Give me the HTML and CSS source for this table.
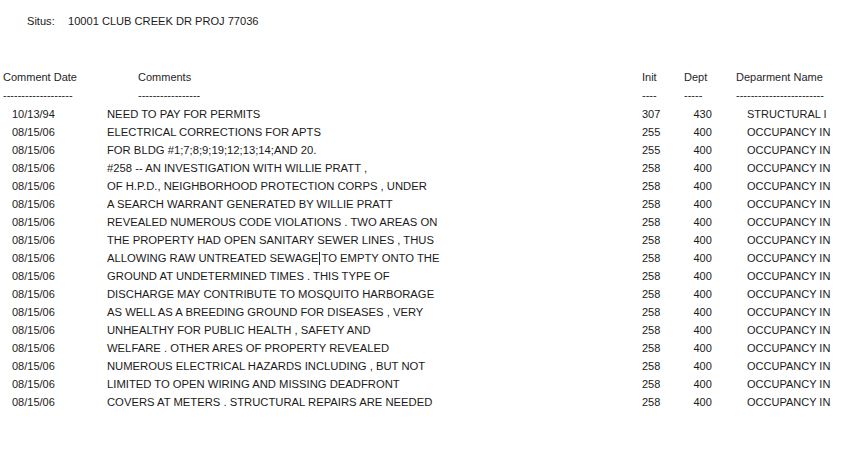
FILE: index.html
```html
<!DOCTYPE html>
<html>
<head>
<meta charset="utf-8">
<link rel="stylesheet" href="styles.css">
</head>
<body>
<div class="situs"><span class="situs-label">Situs:</span><span>10001 CLUB CREEK DR PROJ 77036</span></div>
<div class="report">
  <div class="row head">
    <div class="c1">Comment Date</div><div class="c2">Comments</div><div class="c3">Init</div><div class="c4">Dept</div><div class="c5">Deparment Name</div>
  </div>
  <div class="row head">
    <div class="c1">-------------------</div><div class="c2">-----------------</div><div class="c3">----</div><div class="c4">-----</div><div class="c5">------------------------</div>
  </div>
  <div class="row"><div class="c1">10/13/94</div><div class="c2">NEED TO PAY FOR PERMITS</div><div class="c3">307</div><div class="c4">430</div><div class="c5">STRUCTURAL I</div></div>
  <div class="row"><div class="c1">08/15/06</div><div class="c2">ELECTRICAL CORRECTIONS FOR APTS</div><div class="c3">255</div><div class="c4">400</div><div class="c5">OCCUPANCY IN</div></div>
  <div class="row"><div class="c1">08/15/06</div><div class="c2">FOR BLDG #1;7;8;9;19;12;13;14;AND 20.</div><div class="c3">255</div><div class="c4">400</div><div class="c5">OCCUPANCY IN</div></div>
  <div class="row"><div class="c1">08/15/06</div><div class="c2">#258 -- AN INVESTIGATION WITH WILLIE PRATT ,</div><div class="c3">258</div><div class="c4">400</div><div class="c5">OCCUPANCY IN</div></div>
  <div class="row"><div class="c1">08/15/06</div><div class="c2">OF H.P.D., NEIGHBORHOOD PROTECTION CORPS , UNDER</div><div class="c3">258</div><div class="c4">400</div><div class="c5">OCCUPANCY IN</div></div>
  <div class="row"><div class="c1">08/15/06</div><div class="c2">A SEARCH WARRANT GENERATED BY WILLIE PRATT</div><div class="c3">258</div><div class="c4">400</div><div class="c5">OCCUPANCY IN</div></div>
  <div class="row"><div class="c1">08/15/06</div><div class="c2">REVEALED NUMEROUS CODE VIOLATIONS . TWO AREAS ON</div><div class="c3">258</div><div class="c4">400</div><div class="c5">OCCUPANCY IN</div></div>
  <div class="row"><div class="c1">08/15/06</div><div class="c2">THE PROPERTY HAD OPEN SANITARY SEWER LINES , THUS</div><div class="c3">258</div><div class="c4">400</div><div class="c5">OCCUPANCY IN</div></div>
  <div class="row"><div class="c1">08/15/06</div><div class="c2">ALLOWING RAW UNTREATED SEWAGE<span class="caret"></span>TO EMPTY ONTO THE</div><div class="c3">258</div><div class="c4">400</div><div class="c5">OCCUPANCY IN</div></div>
  <div class="row"><div class="c1">08/15/06</div><div class="c2">GROUND AT UNDETERMINED TIMES . THIS TYPE OF</div><div class="c3">258</div><div class="c4">400</div><div class="c5">OCCUPANCY IN</div></div>
  <div class="row"><div class="c1">08/15/06</div><div class="c2">DISCHARGE MAY CONTRIBUTE TO MOSQUITO HARBORAGE</div><div class="c3">258</div><div class="c4">400</div><div class="c5">OCCUPANCY IN</div></div>
  <div class="row"><div class="c1">08/15/06</div><div class="c2">AS WELL AS A BREEDING GROUND FOR DISEASES , VERY</div><div class="c3">258</div><div class="c4">400</div><div class="c5">OCCUPANCY IN</div></div>
  <div class="row"><div class="c1">08/15/06</div><div class="c2">UNHEALTHY FOR PUBLIC HEALTH , SAFETY AND</div><div class="c3">258</div><div class="c4">400</div><div class="c5">OCCUPANCY IN</div></div>
  <div class="row"><div class="c1">08/15/06</div><div class="c2">WELFARE . OTHER ARES OF PROPERTY REVEALED</div><div class="c3">258</div><div class="c4">400</div><div class="c5">OCCUPANCY IN</div></div>
  <div class="row"><div class="c1">08/15/06</div><div class="c2">NUMEROUS ELECTRICAL HAZARDS INCLUDING , BUT NOT</div><div class="c3">258</div><div class="c4">400</div><div class="c5">OCCUPANCY IN</div></div>
  <div class="row"><div class="c1">08/15/06</div><div class="c2">LIMITED TO OPEN WIRING AND MISSING DEADFRONT</div><div class="c3">258</div><div class="c4">400</div><div class="c5">OCCUPANCY IN</div></div>
  <div class="row"><div class="c1">08/15/06</div><div class="c2">COVERS AT METERS . STRUCTURAL REPAIRS ARE NEEDED</div><div class="c3">258</div><div class="c4">400</div><div class="c5">OCCUPANCY IN</div></div>
</div>
</body>
</html>
```
FILE: styles.css
```css
html, body {
  margin: 0;
  padding: 0;
  background: #ffffff;
}
body {
  font-family: "Liberation Sans", Arial, sans-serif;
  font-size: 11px;
  line-height: 18px;
  color: #1a1a1a;
  width: 851px;
  height: 461px;
  overflow: hidden;
}
.situs {
  display: flex;
  padding: 12px 0 0 27px;
  height: 18px;
  font-size: 11.1px;
}
.situs-label {
  width: 41px;
}
.report {
  margin-top: 38px;
  display: flex;
  flex-direction: column;
}
.row {
  display: grid;
  grid-template-columns: 100px 530px 45px 50px 126px;
  height: 18px;
  white-space: nowrap;
}
.head {
  color: #262626;
}
.head .c1 { padding-left: 3px; }
.head .c2 { padding-left: 38px; }
.head .c3 { padding-left: 12px; }
.head .c4 { padding-left: 9px; }
.head .c5 { padding-left: 11px; }
.row:not(.head) .c1 { padding-left: 12px; }
.row:not(.head) .c2 { padding-left: 7px; font-size: 11.25px; }
.row:not(.head) .c3 { padding-left: 12px; }
.row:not(.head) .c4 { padding-left: 18.5px; }
.row:not(.head) .c5 { padding-left: 22px; }
.row:nth-child(3) { margin-top: 1px; }
.caret {
  display: inline-block;
  width: 0;
  height: 13px;
  border-left: 1px solid #222;
  margin: 0 1px 0 1px;
  vertical-align: -3px;
}
```
